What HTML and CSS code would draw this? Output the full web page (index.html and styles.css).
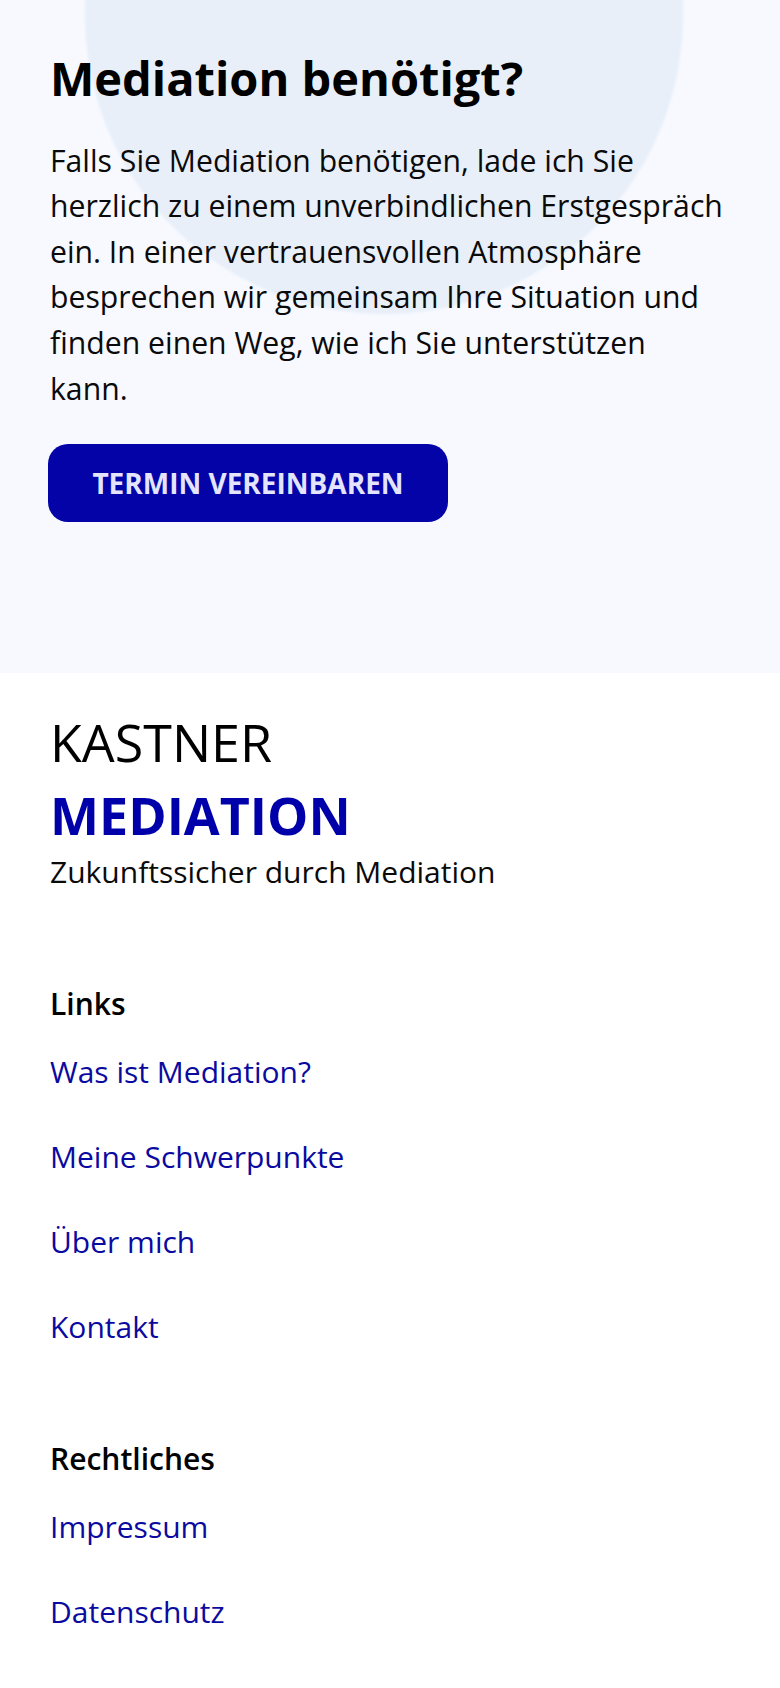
FILE: index.html
```html
<!DOCTYPE html>
<html lang="de">
<head>
<meta charset="utf-8">
<title>Kastner Mediation</title>
<link rel="stylesheet" href="styles.css">
</head>
<body>
<section class="cta">
  <h2 class="cta-title">Mediation benötigt?</h2>
  <p class="cta-text">Falls Sie Mediation benötigen, lade ich Sie herzlich zu einem unverbindlichen Erstgespräch ein. In einer vertrauensvollen Atmosphäre besprechen wir gemeinsam Ihre Situation und finden einen Weg, wie ich Sie unterstützen kann.</p>
  <a class="cta-button" href="#">TERMIN VEREINBAREN</a>
</section>
<footer class="footer">
  <div class="brand">
    <div class="brand-top">KASTNER</div>
    <div class="brand-bottom">MEDIATION</div>
    <div class="brand-claim">Zukunftssicher durch Mediation</div>
  </div>
  <nav class="link-group">
    <h3 class="group-title">Links</h3>
    <ul class="group-list">
      <li><a href="#">Was ist Mediation?</a></li>
      <li><a href="#">Meine Schwerpunkte</a></li>
      <li><a href="#">Über mich</a></li>
      <li><a href="#">Kontakt</a></li>
    </ul>
  </nav>
  <nav class="link-group">
    <h3 class="group-title">Rechtliches</h3>
    <ul class="group-list">
      <li><a href="#">Impressum</a></li>
      <li><a href="#">Datenschutz</a></li>
    </ul>
  </nav>
</footer>
</body>
</html>
```
FILE: styles.css
```css
html, body {
  margin: 0;
  padding: 0;
  background: #ffffff;
}
body {
  font-family: "Open Sans", "Noto Sans", sans-serif;
  color: #000000;
}
.cta {
  padding: 50px 50px 151px 50px;
  background:
    radial-gradient(circle 300px at 384px 15px, #e8eff9 0, #e8eff9 297px, rgba(232,239,249,0) 301px),
    #f7f9fe;
}
.cta-title {
  margin: 0;
  font-size: 47px;
  line-height: 57.6px;
  font-weight: 700;
  color: #000;
}
.cta-text {
  max-width: 676px;
  margin: 30px 0 0 0;
  font-size: 30.2px;
  line-height: 45.6px;
  font-weight: 400;
  color: #0a0a0a;
}
.cta-button {
  display: block;
  box-sizing: border-box;
  width: 400px;
  margin: 32.8px 0 0 -2px;
  padding: 20px 0;
  background: #0303a8;
  color: #e4e4ff;
  border-radius: 20px;
  text-align: center;
  text-decoration: none;
  font-size: 28px;
  line-height: 38px;
  font-weight: 700;
}
.footer {
  padding: 32px 50px 40px 50px;
}
.brand-top,
.brand-bottom {
  font-size: 52px;
  line-height: 73px;
}
.brand-top {
  font-weight: 400;
  color: #000;
}
.brand-bottom {
  font-weight: 700;
  color: #0000aa;
}
.brand-claim {
  font-size: 30px;
  line-height: 42px;
  color: #0a0a0a;
}
.link-group {
  margin-top: 90px;
}
.group-title {
  margin: 0;
  font-size: 30px;
  line-height: 42px;
  font-weight: 600;
  color: #000;
}
.group-list {
  list-style: none;
  margin: 26px 0 0 0;
  padding: 0;
  display: flex;
  flex-direction: column;
  gap: 43px;
}
.group-list li {
  font-size: 30px;
  line-height: 42px;
}
.group-list a {
  color: #0a0aa0;
  text-decoration: none;
}
```
